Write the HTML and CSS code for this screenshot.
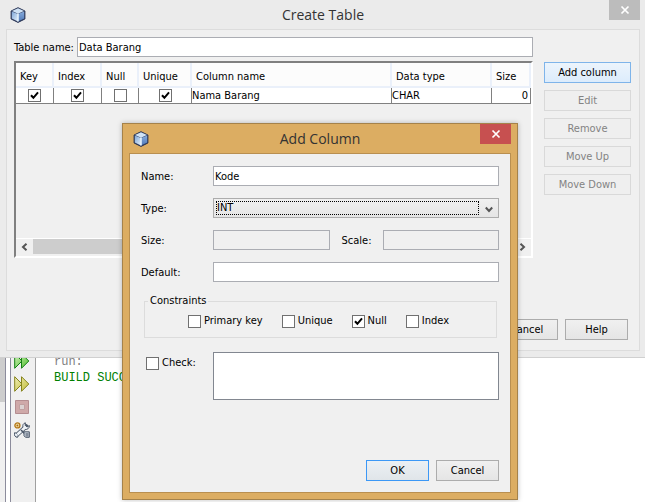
FILE: index.html
```
<!DOCTYPE html>
<html lang="id">

<head>
    <meta charset="UTF-8">
    <meta name="viewport" content="width=device-width, initial-scale=1.0">
    <title>Create Table</title>
    <link rel="stylesheet" href="styles.css">
</head>

<body>
    <svg class="defs" aria-hidden="true">
        <defs>
            <linearGradient id="cubeLeft" x1="0" y1="0" x2="1" y2="1">
                <stop offset="0" stop-color="#7ea6d8" />
                <stop offset="1" stop-color="#e6f2fc" />
            </linearGradient>
            <linearGradient id="cubeRight" x1="0" y1="0" x2="0" y2="1">
                <stop offset="0" stop-color="#86abdc" />
                <stop offset="1" stop-color="#5079b8" />
            </linearGradient>
            <linearGradient id="greenArrow" x1="0" y1="0" x2="1" y2="1">
                <stop offset="0" stop-color="#d2f0bd" />
                <stop offset="1" stop-color="#4fc02c" />
            </linearGradient>
            <linearGradient id="yellowArrow" x1="0" y1="0" x2="1" y2="1">
                <stop offset="0" stop-color="#efeeb4" />
                <stop offset="1" stop-color="#c3bd3a" />
            </linearGradient>
        </defs>
        <symbol id="cube" viewBox="0 0 16 16">
            <path d="M8 .7 14.9 4V12L8 15.4 1.1 12V4Z" fill="#2a3556" stroke="#2a3556" stroke-linejoin="round" />
            <path d="M8 1.3 14 4.1 8 6.8 2 4.1Z" fill="#cfe2f5" />
            <path d="M1.8 4.5 8 7V14.6L1.8 11.6Z" fill="url(#cubeLeft)" />
            <path d="M8 7 14.2 4.5V11.6L8 14.6Z" fill="url(#cubeRight)" />
            <path d="M8 6.6V14.6" stroke="#e4f1fb" stroke-width="1.6" />
        </symbol>
        <symbol id="cross" viewBox="0 0 10 10">
            <path d="M1.5 1.5 8.5 8.5M8.5 1.5 1.5 8.5" stroke="#fff" stroke-width="1.7" />
        </symbol>
    </svg>

    <!-- output window -->
    <div class="ide">
        <div class="gutter"></div>
        <div class="tools">
            <button type="button" aria-label="Rerun">
                <svg viewBox="0 0 16 16"><path d="M.7 .7 8 8 .7 15.3ZM7.5 .7 14.8 8 7.5 15.3Z" fill="url(#greenArrow)" stroke="#148014" /></svg>
            </button>
            <button type="button" aria-label="Rerun with parameters">
                <svg viewBox="0 0 16 16"><path d="M.7 .7 8 8 .7 15.3ZM7.5 .7 14.8 8 7.5 15.3Z" fill="url(#yellowArrow)" stroke="#85831c" /></svg>
            </button>
            <button type="button" aria-label="Stop">
                <svg viewBox="0 0 16 16"><path d="M1.5 1.5H14.5V14.5H1.5Z" fill="#cfa9a9" stroke="#b48d90" /><path d="M5.5 5.5H10.5V10.5H5.5Z" fill="#dcd2d2" stroke="#c0a0a0" /></svg>
            </button>
            <button type="button" aria-label="Settings">
                <svg viewBox="0 0 16 16">
                    <path d="M2.8 13 12.2 4.4" stroke="#4b5768" stroke-width="4.4" stroke-linecap="round" />
                    <path d="M11.4.8A3.6 3.6 0 0 0 9 5.2L11 7.4A3.6 3.6 0 0 0 15.4 3.6L13 5 11.2 3.4Z" fill="#e9eef4" stroke="#4b5768" />
                    <path d="M.7 10.6 3 11.6 4.3 13 3.6 15.3A3.2 3.2 0 0 1 .7 10.6Z" fill="#e9eef4" stroke="#4b5768" />
                    <path d="M3.4 12.5 11.8 4.8" stroke="#f0f4f8" stroke-width="2.6" />
                    <path d="M7 8 10.5 11.5" stroke="#4b5768" stroke-width="1.6" />
                    <path d="M10 9.8H15.3V15.3H11.5L10 13.8Z" fill="#c8d0da" stroke="#4b5768" />
                    <path d="M12.2 11V14.5M13.8 11V14.5" stroke="#4b5768" stroke-width=".8" />
                    <circle cx="3.4" cy="3.4" r="2.5" fill="#f7e3ae" stroke="#b57a1c" stroke-width="1.4" />
                    <circle cx="3.4" cy="3.4" r="1" fill="#a56a10" />
                </svg>
            </button>
        </div>
        <div class="output">
            <p>run:</p>
            <p class="success">BUILD SUCCESSFUL</p>
        </div>
    </div>

    <!-- create table -->
    <div class="window create">
        <div class="titlebar">
            <svg class="logo"><use href="#cube" /></svg>
            <h1>Create Table</h1>
            <button type="button" class="close" aria-label="Close"><svg><use href="#cross" /></svg></button>
        </div>
        <form class="panel">
            <div class="editor">
                <div class="left">
                    <div class="tablename">
                        <label for="tableName">Table name:</label>
                        <input type="text" class="field" id="tableName" value="Data Barang">
                    </div>
                    <div class="grid">
                        <table>
                            <colgroup>
                                <col class="c-key">
                                <col class="c-index">
                                <col class="c-null">
                                <col class="c-unique">
                                <col>
                                <col class="c-type">
                                <col class="c-size">
                            </colgroup>
                            <thead>
                                <tr>
                                    <th>Key</th>
                                    <th>Index</th>
                                    <th>Null</th>
                                    <th>Unique</th>
                                    <th>Column name</th>
                                    <th>Data type</th>
                                    <th>Size</th>
                                </tr>
                            </thead>
                            <tbody>
                                <tr>
                                    <td class="tick"><input type="checkbox" aria-label="Key" checked></td>
                                    <td class="tick"><input type="checkbox" aria-label="Index" checked></td>
                                    <td class="tick"><input type="checkbox" aria-label="Null"></td>
                                    <td class="tick"><input type="checkbox" aria-label="Unique" checked></td>
                                    <td>Nama Barang</td>
                                    <td>CHAR</td>
                                    <td class="num">0</td>
                                </tr>
                            </tbody>
                        </table>
                        <div class="scrollbar">
                            <button type="button" aria-label="Scroll left"><svg viewBox="0 0 7 8"><path d="M5.5 .8 2 4 5.5 7.2" /></svg></button>
                            <div class="thumb"></div>
                            <button type="button" aria-label="Scroll right"><svg viewBox="0 0 7 8"><path d="M1.5 .8 5 4 1.5 7.2" /></svg></button>
                        </div>
                    </div>
                </div>
                <div class="side">
                    <button type="button" class="btn hot">Add column</button>
                    <button type="button" class="btn" disabled>Edit</button>
                    <button type="button" class="btn" disabled>Remove</button>
                    <button type="button" class="btn" disabled>Move Up</button>
                    <button type="button" class="btn" disabled>Move Down</button>
                </div>
            </div>
            <div class="buttons">
                <button type="button" class="btn">Cancel</button>
                <button type="button" class="btn">Help</button>
            </div>
        </form>
    </div>

    <!-- add column -->
    <div class="window add">
        <div class="titlebar">
            <svg class="logo"><use href="#cube" /></svg>
            <h2>Add Column</h2>
            <button type="button" class="close" aria-label="Close"><svg><use href="#cross" /></svg></button>
        </div>
        <form class="panel">
            <div class="row">
                <label for="name">Name:</label>
                <input type="text" class="field" id="name" value="Kode">
            </div>
            <div class="row">
                <label for="type">Type:</label>
                <div class="combo">
                    <select id="type">
                        <option>INT</option>
                        <option>CHAR</option>
                    </select>
                    <svg viewBox="0 0 8 7"><path d="M.8 1.5 4 5 7.2 1.5" /></svg>
                </div>
            </div>
            <div class="row sizes">
                <label for="size">Size:</label>
                <input type="text" class="field" id="size" disabled>
                <label for="scale">Scale:</label>
                <input type="text" class="field" id="scale" disabled>
            </div>
            <div class="row">
                <label for="default">Default:</label>
                <input type="text" class="field" id="default">
            </div>
            <fieldset>
                <legend>Constraints</legend>
                <label><input type="checkbox">Primary key</label>
                <label><input type="checkbox">Unique</label>
                <label><input type="checkbox" checked>Null</label>
                <label><input type="checkbox">Index</label>
            </fieldset>
            <div class="row check">
                <label><input type="checkbox">Check:</label>
                <textarea aria-label="Check expression"></textarea>
            </div>
            <div class="buttons">
                <button type="button" class="btn default">OK</button>
                <button type="button" class="btn">Cancel</button>
            </div>
        </form>
    </div>
</body>

</html>
```
FILE: styles.css
```
* {
    margin: 0;
    padding: 0;
    box-sizing: border-box;
}

body {
    position: relative;
    min-height: 100vh;
    background-color: white;
    font: 11px/14px "DejaVu Sans Condensed", "Noto Sans", sans-serif;
    color: black;
}

button,
input,
select,
textarea {
    font: inherit;
    color: inherit;
    border-radius: 0;
}

svg {
    display: block;
}

.defs {
    position: absolute;
    width: 0;
    height: 0;
}

/* output window */
.ide {
    display: flex;
    min-height: 100vh;
}

.gutter {
    width: 6px;
    background: linear-gradient(#cdcdcd 402px, #f0f0f0 402px);
    border-right: 1px solid #8c8c9c;
}

.tools {
    width: 26px;
    margin-left: 4px;
    padding: 353px 0 0 3px;
    border-left: 1px solid #8c8c9c;
    border-right: 1px solid #a0a0a0;
    background-color: #f0f0f0;
    display: flex;
    flex-direction: column;
    gap: 7px;
}

.tools button {
    width: 16px;
    height: 16px;
    border: 0;
    background: none;
}

.output {
    flex: 1;
    padding: 354px 0 0 18px;
    font: 12px/16px "Liberation Mono", monospace;
    color: #808080;
}

.output .success {
    color: #008000;
}

/* windows */
.window {
    position: absolute;
}

.create {
    top: 0;
    left: 0;
    right: 0;
    padding: 0 5px 6px 6px;
    background-color: #ebebeb;
    border-bottom: 1px solid #d0d0d0;
}

.add {
    top: 123px;
    left: 122px;
    right: 127px;
    padding: 0 6px 6px;
    background-color: #dcad62;
    border: 1px solid #a5824a;
    box-shadow: 0 0 5px rgba(0, 0, 0, 0.25);
}

.titlebar {
    height: 29px;
    display: grid;
    grid-template-columns: 31px 1fr 31px;
    align-items: center;
}

.titlebar .logo {
    width: 16px;
    height: 16px;
    margin-left: 4px;
}

.titlebar h1,
.titlebar h2 {
    font: 14px/18px "Open Sans", "Noto Sans", sans-serif;
    text-align: center;
    color: #333;
}

.close {
    width: 31px;
    height: 20px;
    align-self: start;
    border: 0;
    background-color: #bcbcbc;
    display: flex;
    align-items: center;
    justify-content: center;
}

.close svg {
    width: 10px;
    height: 10px;
}

.add .close {
    background-color: #c75050;
}

.panel {
    background-color: #f0f0f0;
    border: 1px solid #dcdcdc;
}

.create .panel {
    padding: 7px 8px 10px 7px;
}

.add .panel {
    padding: 12px 11px 11px;
    border-color: #b98f50;
}

/* controls */
.field {
    width: 100%;
    min-width: 0;
    height: 20px;
    padding: 0 1px;
    border: 1px solid #abadb3;
    background-color: white;
}

.field:disabled {
    background-color: #f0f0f0;
}

.btn {
    height: 21px;
    width: 63px;
    border: 1px solid #acacac;
    background: linear-gradient(#f0f0f0, #e5e5e5);
    line-height: 14px;
}

.btn:disabled {
    color: #838383;
    border-color: #d9d9d9;
    background: #efefef;
}

.btn.hot {
    border-color: #7eb4ea;
    background: linear-gradient(#ecf4fc, #dcecfc);
}

.btn.default {
    border-color: #3c98f6;
    background: linear-gradient(#ecf0f4, #e0e5e9);
}

.buttons {
    display: flex;
    justify-content: flex-end;
    gap: 7px;
}

input[type="checkbox"] {
    appearance: none;
    width: 13px;
    height: 13px;
    border: 1px solid #707070;
    background-color: white;
    display: block;
    flex: none;
}

input[type="checkbox"]:checked {
    background-image: url("data:image/svg+xml,%3Csvg xmlns='http://www.w3.org/2000/svg' viewBox='0 0 11 11'%3E%3Cpath d='M2 5.2 4.4 7.8 9 2.4' fill='none' stroke='%23000' stroke-width='2'/%3E%3C/svg%3E");
}

/* create table */
.editor {
    display: flex;
    gap: 11px;
}

.left {
    flex: 1;
    min-width: 0;
}

.tablename {
    display: flex;
    align-items: center;
    white-space: nowrap;
}

.tablename label {
    flex: none;
    width: 63px;
    padding-top: 2px;
}

.grid {
    height: 197px;
    margin-top: 4px;
    border: 2px solid white;
    border-top-color: #808080;
    border-left-color: #808080;
    display: flex;
    flex-direction: column;
    justify-content: space-between;
}

table {
    width: 100%;
    table-layout: fixed;
    border-collapse: separate;
    border-spacing: 0;
}

.c-key {
    width: 38px;
}

.c-index {
    width: 48px;
}

.c-null {
    width: 37px;
}

.c-unique {
    width: 53px;
}

.c-type {
    width: 100px;
}

.c-size {
    width: 39px;
}

th {
    height: 25px;
    padding: 4px 0 0 4px;
    font-weight: normal;
    text-align: left;
    white-space: nowrap;
    background-color: #fcfcfc;
    border-right: 2px solid #eaf0fa;
    border-bottom: 2px solid #eaf0fa;
}

td {
    height: 16px;
    background-color: white;
    border-right: 1px solid #808080;
    border-bottom: 1px solid #808080;
    white-space: nowrap;
}

.tick input {
    margin: 0 auto;
}

.num {
    text-align: right;
    padding-right: 2px;
}

.scrollbar {
    height: 18px;
    padding-bottom: 2px;
    border-top: 1px solid white;
    display: flex;
}

.scrollbar button {
    width: 17px;
    border: 0;
    background: none;
    display: flex;
    align-items: center;
    justify-content: center;
}

.scrollbar svg {
    width: 7px;
    height: 8px;
}

.scrollbar path,
.combo path {
    fill: none;
    stroke: #555;
    stroke-width: 2;
}

.thumb {
    flex: 1;
    margin-right: 40px;
    background-color: #cdcdcd;
}

.side {
    width: 87px;
    padding-top: 25px;
    display: flex;
    flex-direction: column;
    gap: 7px;
}

.side .btn {
    width: 100%;
}

.create .buttons {
    margin-top: 61px;
    padding-right: 3px;
}

/* add column */
.row {
    display: grid;
    grid-template-columns: 72px 1fr;
    align-items: center;
    margin-bottom: 12px;
}

.row label {
    padding-top: 2px;
}

.sizes {
    grid-template-columns: 72px 1fr 53px 1fr;
}

.sizes .field + label {
    padding-left: 12px;
}

.combo {
    height: 20px;
    padding: 2px 19px 2px 2px;
    border: 1px solid #acacac;
    background: linear-gradient(#f0f0f0, #e5e5e5);
    position: relative;
}

.combo select {
    appearance: none;
    display: block;
    width: 100%;
    height: 14px;
    border: 1px dotted black;
    background: none;
    line-height: 12px;
}

.combo svg {
    position: absolute;
    right: 5px;
    top: 7px;
    width: 8px;
    height: 7px;
}

fieldset {
    margin: 0 2px 14px 3px;
    padding: 6px 0 9px 43px;
    border: 1px solid #dcdcdc;
    display: flex;
    gap: 19px;
}

legend {
    margin-left: -40px;
    padding: 0 2px;
}

fieldset label,
.check label {
    display: flex;
    align-items: center;
    gap: 3px;
    white-space: nowrap;
}

.check {
    align-items: start;
    margin-bottom: 60px;
}

.check label {
    padding: 4px 0 0 5px;
}

.check textarea {
    display: block;
    width: 100%;
    height: 48px;
    border: 1px solid #828790;
    background-color: white;
    resize: none;
}
```
